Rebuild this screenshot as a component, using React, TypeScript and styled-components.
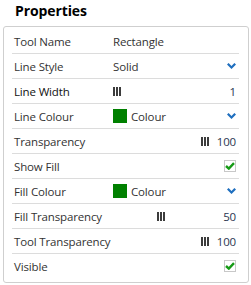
import React from "react";
import styled, { createGlobalStyle } from "styled-components";

type Row =
  | { kind: "text"; label: string; value: string }
  | { kind: "select"; label: string; value: string }
  | { kind: "slider"; label: string; value: number; frac: number; strong?: boolean }
  | { kind: "colour"; label: string; colour: string }
  | { kind: "check"; label: string; checked: boolean };

const rows: Row[] = [
  { kind: "text", label: "Tool Name", value: "Rectangle" },
  { kind: "select", label: "Line Style", value: "Solid" },
  { kind: "slider", label: "Line Width", value: 1, frac: 0, strong: true },
  { kind: "colour", label: "Line Colour", colour: "#008000" },
  { kind: "slider", label: "Transparency", value: 100, frac: 1 },
  { kind: "check", label: "Show Fill", checked: true },
  { kind: "colour", label: "Fill Colour", colour: "#008000" },
  { kind: "slider", label: "Fill Transparency", value: 50, frac: 0.5 },
  { kind: "slider", label: "Tool Transparency", value: 100, frac: 1 },
  { kind: "check", label: "Visible", checked: true },
];

const Chevron = () => (
  <svg width="9" height="6" viewBox="0 0 9 6">
    <polygon points="0,1.6 1.6,0 4.5,2.9 7.4,0 9,1.6 4.5,6" fill="#1f6fbf" />
  </svg>
);

const Handle = () => (
  <svg width="8" height="9" viewBox="0 0 8 9">
    <rect x="0" y="0" width="2" height="9" fill="#3c3c3c" />
    <rect x="3" y="0" width="2" height="9" fill="#3c3c3c" />
    <rect x="6" y="0" width="2" height="9" fill="#3c3c3c" />
  </svg>
);

const CheckMark = () => (
  <svg width="10" height="8" viewBox="0 0 10 8">
    <path d="M1 4 L3.8 6.6 L9 1.2" stroke="#159a15" strokeWidth="2.4" fill="none" />
  </svg>
);

const App = (): JSX.Element => {
  const renderValue = (row: Row) => {
    switch (row.kind) {
      case "text":
        return <Value>{row.value}</Value>;
      case "select":
        return (
          <>
            <Value>{row.value}</Value>
            <RightSlot>
              <Chevron />
            </RightSlot>
          </>
        );
      case "colour":
        return (
          <>
            <Swatch colour={row.colour} />
            <Value>Colour</Value>
            <RightSlot>
              <Chevron />
            </RightSlot>
          </>
        );
      case "slider":
        return (
          <>
            <Track>
              <HandleWrap style={{ left: `${row.frac * 88}px` }}>
                <Handle />
              </HandleWrap>
            </Track>
            <Number>{row.value}</Number>
          </>
        );
      case "check":
        return (
          <RightSlot>
            <Box>{row.checked && <CheckMark />}</Box>
          </RightSlot>
        );
    }
  };

  return (
    <>
      <GlobalStyle />
      <Title>Properties</Title>
      <Panel>
        {rows.map((row) => (
          <RowLine key={row.label}>
            <Label strong={row.kind === "slider" && !!row.strong}>{row.label}</Label>
            <Cell>{renderValue(row)}</Cell>
          </RowLine>
        ))}
      </Panel>
    </>
  );
};

export default App;

const GlobalStyle = createGlobalStyle`
  body {
    margin: 0;
    background: #ffffff;
    font-family: "Open Sans", "Noto Sans", sans-serif;
  }
`;

const Title = styled.h1`
  margin: 0;
  height: 26px;
  padding-left: 15px;
  font-size: 14px;
  font-weight: 700;
  line-height: 22px;
  letter-spacing: -0.1px;
  color: #000;
`;

const Panel = styled.div`
  margin-left: 3px;
  width: 244px;
  height: 253px;
  border: 1px solid #cfcfcf;
  border-radius: 3px;
  padding: 2px 0 0;
`;

const RowLine = styled.div`
  display: flex;
  align-items: center;
  height: 24px;
  margin: 0 9px 0 8px;
  padding: 0 3px 0 2px;
  border-bottom: 1px solid #dcdcdc;
  font-size: 11.5px;
  letter-spacing: -0.15px;

  &:last-child {
    border-bottom: none;
  }
`;

const Label = styled.div<{ strong?: boolean }>`
  flex: 0 0 99px;
  min-width: 0;
  color: ${({ strong }) => (strong ? "#111" : "#333")};
  white-space: nowrap;
`;

const Cell = styled.div`
  flex: 1;
  display: flex;
  align-items: center;
  min-width: 0;
`;

const Value = styled.span`
  color: #333;
`;

const RightSlot = styled.div`
  margin-left: auto;
  display: flex;
  align-items: center;
`;

const Swatch = styled.span<{ colour: string }>`
  width: 14px;
  height: 14px;
  margin-right: 4px;
  background: ${({ colour }) => colour};
`;

const Track = styled.div`
  position: relative;
  width: 96px;
  height: 9px;
`;

const HandleWrap = styled.div`
  position: absolute;
  top: 0;
  display: flex;
`;

const Number = styled.span`
  margin-left: auto;
  color: #2a3550;
`;

const Box = styled.div`
  width: 10px;
  height: 10px;
  border: 1px solid #c8c8c8;
  background: #fff;
  display: flex;
  align-items: center;
  justify-content: center;
`;
